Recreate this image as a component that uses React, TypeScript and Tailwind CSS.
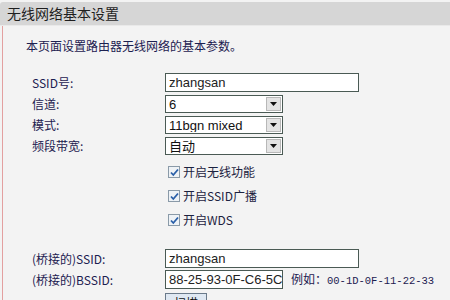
import { useState } from 'react';

const font = { fontFamily: '"Noto Sans CJK SC", "Liberation Sans", sans-serif' };

function Select({ value, width = 'w-[118px]' }: { value: string; width?: string }) {
  return (
    <div className={`flex h-[18px] ${width} items-center border border-[#4a5a54] bg-white`}>
      <span className="flex-1 truncate pl-[3px] text-[13px] leading-none text-[#111]" style={{ fontFamily: '"Liberation Sans", "Noto Sans CJK SC", sans-serif' }}>
        {value}
      </span>
      <span className="mr-[1px] flex h-[14px] w-[15px] items-center justify-center border border-[#b8b8b8] bg-[#e4e4e4]">
        <svg width="7" height="4" viewBox="0 0 7 4">
          <path d="M0 0h7L3.5 4z" fill="#111" />
        </svg>
      </span>
    </div>
  );
}

function TextInput({ value, width = 'w-[194px]' }: { value: string; width?: string }) {
  return (
    <div
      className={`flex h-[19px] ${width} items-center overflow-hidden whitespace-nowrap border border-[#4a5a54] bg-white pl-[3px] text-[13px] leading-none text-[#222]`}
      style={{ fontFamily: '"Liberation Sans", sans-serif' }}
    >
      {value}
    </div>
  );
}

function Check({ label }: { label: string }) {
  const [on, setOn] = useState(true);
  return (
    <label className="flex h-[24px] cursor-pointer items-center gap-[3px] pl-[3px]" onClick={() => setOn(!on)}>
      <span className="flex h-[12px] w-[12px] items-center justify-center border border-[#8a9aa8] bg-[#eef2f6]">
        {on && (
          <svg width="9" height="9" viewBox="0 0 9 9">
            <path d="M1 4.5l2.3 2.5L8 1.5" fill="none" stroke="#2a5fa8" strokeWidth="1.8" />
          </svg>
        )}
      </span>
      <span className="text-[12px] text-[#1c2240]">{label}</span>
    </label>
  );
}

export default function App() {
  return (
    <div className="h-[300px] w-[450px] overflow-hidden bg-[#f3f3f3] pt-[2px]" style={font}>
      <div className="flex h-[24px] items-center rounded-tl-[3px] border-b border-[#e9e9e9] bg-[#d6d6d6] pl-[7px] text-[14px] text-[#1e1e1e]">
        无线网络基本设置
      </div>
      <div className="ml-[2px] h-full border-l border-[#e3a0a0] pt-[12px]">
        <div className="pl-[23px] text-[12px] leading-[16px] text-[#1c2050]">本页面设置路由器无线网络的基本参数。</div>

        <div className="mt-[19px] grid grid-cols-[133px_1fr] items-center gap-y-[3px] pl-[29px] text-[12px] text-[#1c2050]">
          <span>SSID号:</span>
          <TextInput value="zhangsan" />
          <span>信道:</span>
          <Select value="6" />
          <span>模式:</span>
          <Select value="11bgn mixed" />
          <span>频段带宽:</span>
          <Select value="自动" />
          <span />
          <div className="flex flex-col pt-[2px]">
            <Check label="开启无线功能" />
            <Check label="开启SSID广播" />
            <Check label="开启WDS" />
          </div>
        </div>

        <div className="mt-[17px] grid grid-cols-[133px_1fr] items-center gap-y-[2px] pl-[29px] text-[12px] text-[#1c2050]">
          <span>(桥接的)SSID:</span>
          <TextInput value="zhangsan" />
          <span>(桥接的)BSSID:</span>
          <div className="flex items-center gap-[8px]">
            <TextInput value="88-25-93-0F-C6-5C" width="w-[118px]" />
            <span className="whitespace-nowrap">
              例如：<span className="text-[10.5px]" style={{ fontFamily: '"Liberation Mono", monospace' }}>00-1D-0F-11-22-33</span>
            </span>
          </div>
          <span />
          <div className="pt-[1px]">
            <button className="h-[20px] border border-[#6a7a8a] bg-[#dfe8f2] px-[8px] text-[12px] leading-none text-[#111]">扫描</button>
          </div>
        </div>
      </div>
    </div>
  );
}
